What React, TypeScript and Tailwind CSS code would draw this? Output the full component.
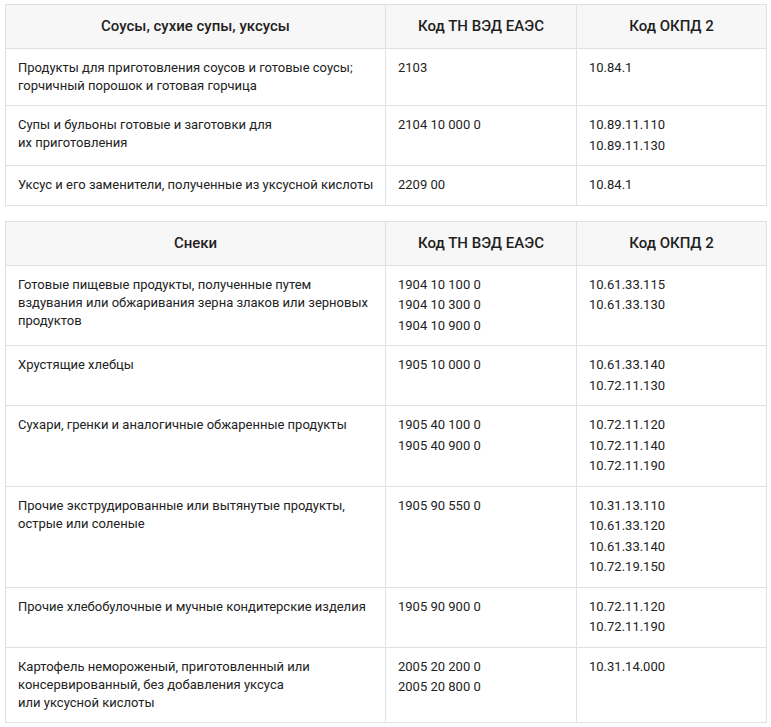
import React from 'react';

type Row = { name: string[]; tn: string[]; okpd: string[] };

const sauces: Row[] = [
    {
        name: ['Продукты для приготовления соусов и готовые соусы;', 'горчичный порошок и готовая горчица'],
        tn: ['2103'],
        okpd: ['10.84.1'],
    },
    {
        name: ['Супы и бульоны готовые и заготовки для', 'их приготовления'],
        tn: ['2104 10 000 0'],
        okpd: ['10.89.11.110', '10.89.11.130'],
    },
    {
        name: ['Уксус и его заменители, полученные из уксусной кислоты'],
        tn: ['2209 00'],
        okpd: ['10.84.1'],
    },
];

const snacks: Row[] = [
    {
        name: ['Готовые пищевые продукты, полученные путем', 'вздувания или обжаривания зерна злаков или зерновых', 'продуктов'],
        tn: ['1904 10 100 0', '1904 10 300 0', '1904 10 900 0'],
        okpd: ['10.61.33.115', '10.61.33.130'],
    },
    {
        name: ['Хрустящие хлебцы'],
        tn: ['1905 10 000 0'],
        okpd: ['10.61.33.140', '10.72.11.130'],
    },
    {
        name: ['Сухари, гренки и аналогичные обжаренные продукты'],
        tn: ['1905 40 100 0', '1905 40 900 0'],
        okpd: ['10.72.11.120', '10.72.11.140', '10.72.11.190'],
    },
    {
        name: ['Прочие экструдированные или вытянутые продукты,', 'острые или соленые'],
        tn: ['1905 90 550 0'],
        okpd: ['10.31.13.110', '10.61.33.120', '10.61.33.140', '10.72.19.150'],
    },
    {
        name: ['Прочие хлебобулочные и мучные кондитерские изделия'],
        tn: ['1905 90 900 0'],
        okpd: ['10.72.11.120', '10.72.11.190'],
    },
    {
        name: ['Картофель немороженый, приготовленный или', 'консервированный, без добавления уксуса', 'или уксусной кислоты'],
        tn: ['2005 20 200 0', '2005 20 800 0'],
        okpd: ['10.31.14.000'],
    },
];

function CodeTable({ title, rows }: { title: string; rows: Row[] }) {
    return (
        <table className="w-[761px] table-fixed border-collapse text-[13px] text-[#222]">
            <colgroup>
                <col className="w-[380px]" />
                <col className="w-[191px]" />
                <col className="w-[190px]" />
            </colgroup>
            <thead>
                <tr className="bg-[#f7f7f7]">
                    {[title, 'Код ТН ВЭД ЕАЭС', 'Код ОКПД 2'].map((h) => (
                        <th key={h} className="h-[44px] border border-[#e1e1e1] px-3 text-center text-[15px] font-medium text-[#1f1f1f]">
                            {h}
                        </th>
                    ))}
                </tr>
            </thead>
            <tbody>
                {rows.map((r, i) => (
                    <tr key={i}>
                        <td className="border border-[#e1e1e1] px-3 pt-[10px] pb-[10px] align-top leading-[18px]">
                            {r.name.map((l) => (
                                <div key={l} className="whitespace-nowrap">{l}</div>
                            ))}
                        </td>
                        <td className="border border-[#e1e1e1] px-3 pt-[9px] pb-[9px] align-top leading-[20.5px]">
                            {r.tn.map((c) => (
                                <div key={c}>{c}</div>
                            ))}
                        </td>
                        <td className="border border-[#e1e1e1] px-3 pt-[9px] pb-[9px] align-top leading-[20.5px]">
                            {r.okpd.map((c) => (
                                <div key={c}>{c}</div>
                            ))}
                        </td>
                    </tr>
                ))}
            </tbody>
        </table>
    );
}

export default function App() {
    return (
        <div className="min-h-[727px] w-[771px] bg-white pl-[5px] pt-[4px] font-['Roboto',sans-serif]">
            <div className="flex flex-col gap-[15px]">
                <CodeTable title="Соусы, сухие супы, уксусы" rows={sauces} />
                <CodeTable title="Снеки" rows={snacks} />
            </div>
        </div>
    );
}
